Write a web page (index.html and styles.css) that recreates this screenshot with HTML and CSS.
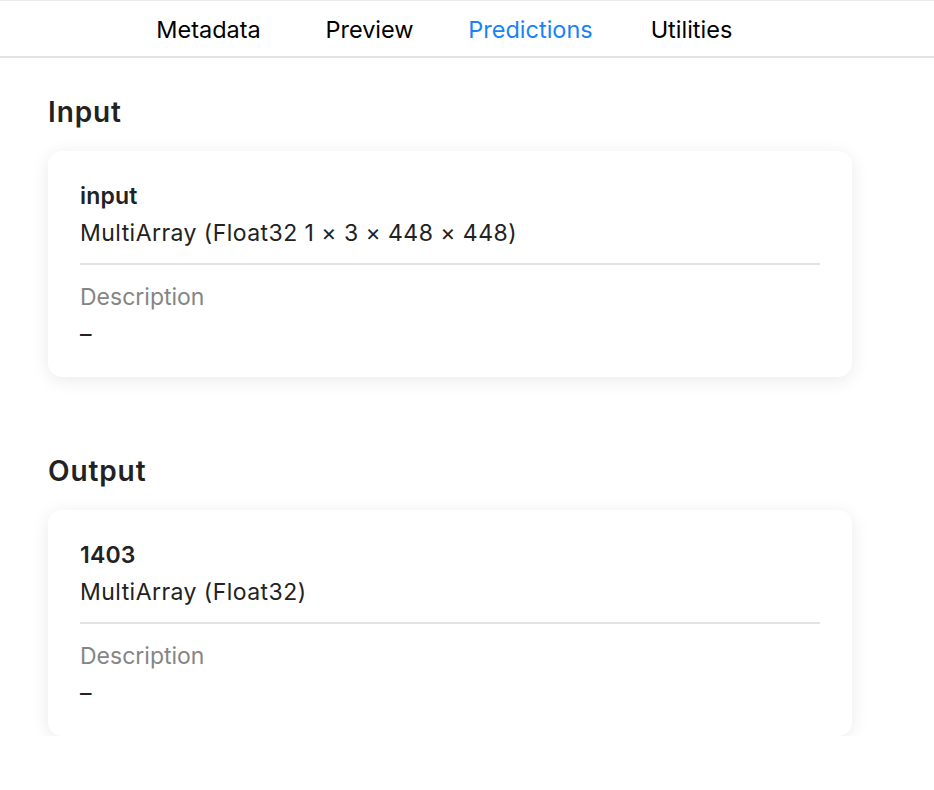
FILE: index.html
```html
<!DOCTYPE html>
<html>
<head>
<meta charset="utf-8">
<link rel="stylesheet" href="styles.css">
</head>
<body>
<nav class="tabbar">
  <div class="tabs">
    <span class="tab">Metadata</span>
    <span class="tab">Preview</span>
    <span class="tab active">Predictions</span>
    <span class="tab">Utilities</span>
  </div>
</nav>
<main class="content">
  <section class="section">
    <h2 class="heading">Input</h2>
    <div class="card">
      <div class="name">input</div>
      <div class="type">MultiArray (Float32 1 × 3 × 448 × 448)</div>
      <hr class="divider">
      <div class="label">Description</div>
      <div class="value">–</div>
    </div>
  </section>
  <section class="section">
    <h2 class="heading">Output</h2>
    <div class="card">
      <div class="name">1403</div>
      <div class="type">MultiArray (Float32)</div>
      <hr class="divider">
      <div class="label">Description</div>
      <div class="value">–</div>
    </div>
  </section>
</main>
</body>
</html>
```
FILE: styles.css
```css
* { box-sizing: border-box; }
html, body {
  margin: 0;
  padding: 0;
  background: #ffffff;
  font-family: Inter, "Noto Sans", sans-serif;
  color: #1d1d1f;
}
.tabbar {
  height: 58px;
  border-top: 1px solid #ececec;
  border-bottom: 2px solid #e3e3e3;
  display: flex;
  align-items: center;
  padding-left: 128px;
  padding-top: 2px;
}
.tabs {
  display: flex;
}
.tab {
  width: 161px;
  text-align: center;
  font-size: 23.5px;
  color: #000;
}
.tab.active { color: #1a82f7; }
.content {
  padding: 38px 82px 0 48px;
  display: flex;
  flex-direction: column;
  gap: 78px;
}
.heading {
  margin: 0 0 23px 0;
  font-size: 28px;
  line-height: 32px;
  font-weight: 600;
  color: #222;
  letter-spacing: 0.9px;
}
.card {
  width: 804px;
  background: #fff;
  border-radius: 14px;
  box-shadow: 0 3px 18px rgba(0,0,0,0.085);
  padding: 27px 32px 24px 32px;
}
.name, .type, .label, .value {
  font-size: 23px;
  line-height: 37px;
}
.name { font-weight: 600; color: #222; letter-spacing: 0.2px; }
.type { color: #222; letter-spacing: 0.45px; }
.divider {
  border: 0;
  height: 2px;
  background: #e3e3e3;
  margin: 11px 0 14px 0;
}
.label { color: #858585; }
.value { color: #222; }
```
